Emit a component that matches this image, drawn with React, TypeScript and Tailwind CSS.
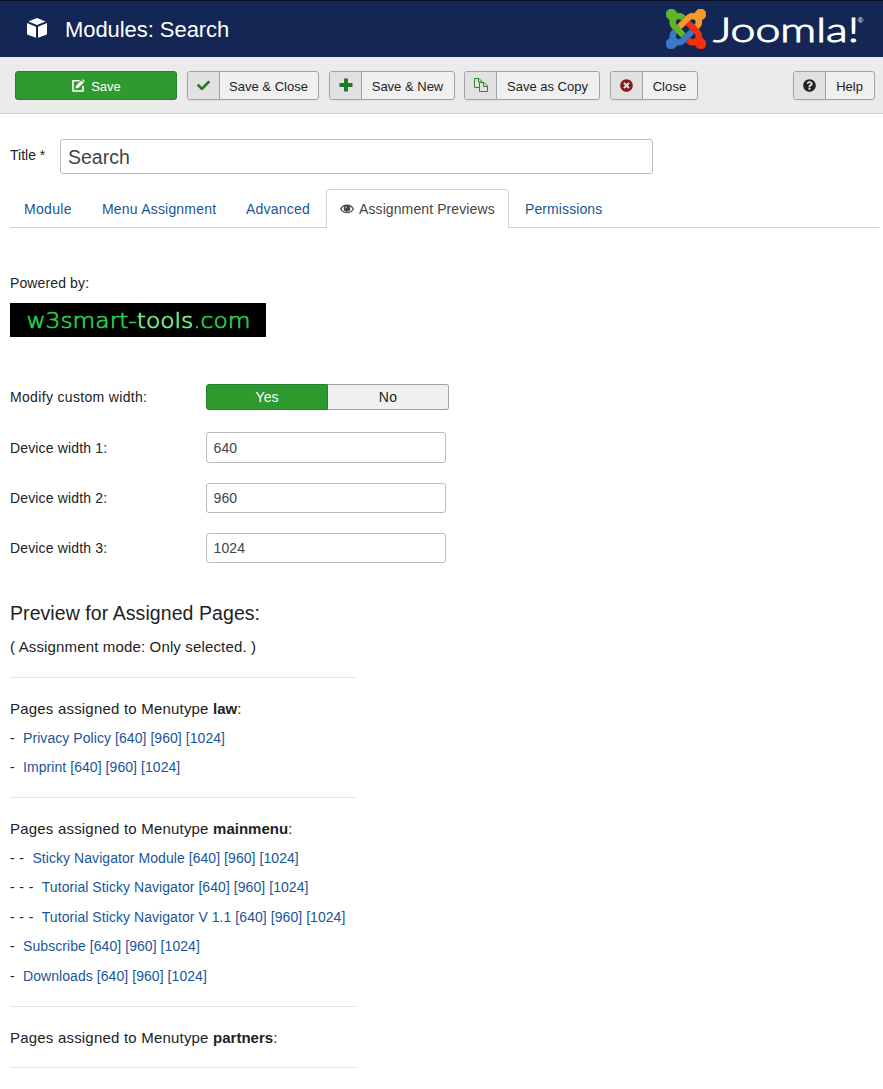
import type { ReactNode } from 'react';
import { FaCheck, FaTimesCircle, FaQuestionCircle } from 'react-icons/fa';

function CubeIcon() {
  return (
    <svg viewBox="0 0 20 20" className="mb-[2px] h-5 w-5" fill="#fff">
      <path d="M10 0 18.600 3.400 10 7 1.400 3.400z" />
      <path d="M0 5 9 8.700v11.100L.7 16.700Q0 16.400 0 15.700z" />
      <path d="M20 5 11 8.700v11.100l8.300-3.100q.7-.3.7-1z" />
    </svg>
  );
}

function EditIcon() {
  return (
    <svg viewBox="0 0 13 13" className="mb-px h-[13px] w-[13px]" fill="none">
      <path d="M7.6 1.8H1v10.200h10V7" stroke="#fff" strokeWidth="1.6" />
      <path d="m4 6.800 5.400-5.200 2.300 2.200L6.300 9.100l-2.800.5z" fill="#fff" />
      <path d="m10.100 1 .8-.8L13 2.300l-.8.8z" fill="#fff" />
    </svg>
  );
}

function PlusIcon() {
  return (
    <svg viewBox="0 0 14 14" className="mb-px h-3.5 w-3.5" fill="#217a25">
      <path d="M5 .5h4v4.500h4.500v4H9v4.500H5V9H.5V5H5z" />
    </svg>
  );
}

function EyeIcon() {
  return (
    <svg viewBox="0 0 14 10" className="mt-[5px] mr-[5px] h-[10px] w-[14px]" fill="none">
      <path d="M.7 5C3.500-.1 10.500-.1 13.300 5 10.500 10 3.500 10 .7 5z" stroke="#444" strokeWidth="1.200" />
      <circle cx="7" cy="4.500" r="3.200" fill="#444" />
      <path d="M5.500 4.300Q5.600 3 7 2.800" stroke="#fff" strokeWidth=".8" />
    </svg>
  );
}

function CopyIcon() {
  return (
    <svg viewBox="0 0 14 14" className="mb-px h-3.5 w-3.5" fill="none" stroke="#2f8733" strokeWidth="1">
      <path d="M5.500 9.500h-5v-9h4.500l3 3v1.500" />
      <path d="M4.500.5v3.500h3.500" />
      <path d="M5.500 4.500h4.500l3.500 3.500v5.500h-8z" fill="#e1e1e1" />
      <path d="M9.500 4.500v4h4" />
    </svg>
  );
}

function JoomlaMark() {
  return (
    <svg viewBox="0 32 448 448" className="mb-px h-10 w-10 shrink-0">
      <path fill="#5eb527" stroke="#5eb527" strokeWidth="10" d="M.6 92.1C.6 58.8 27.4 32 60.4 32c30 0 54.5 21.9 59.2 50.2 32.6-7.6 67.1.6 96.5 30l-44.3 44.3c-20.5-20.5-42.6-16.3-55.4-3.5-14.3 14.3-14.3 37.9 0 52.2l99.5 99.5-44 44.3c-87.7-87.2-49.7-49.7-99.8-99.7-26.8-26.5-35-64.8-24.8-98.9C20.4 144.6.6 120.7.6 92.1z" />
      <path fill="#f99a27" stroke="#f99a27" strokeWidth="10" d="M130.1 208.5l44.3 44.3c10-10 89.7-89.7 99.7-99.8 14.3-14.3 37.6-14.3 51.9 0 12.8 12.8 17 35-3.5 55.4l44 44.3c31.2-31.2 38.5-67.6 28.9-101.2 29.2-4.1 51.9-29.2 51.9-59.5 0-33.2-26.8-60.1-59.8-60.1-30.3 0-55.4 22.5-59.5 51.6-33.8-9.9-71.7-1.5-98.3 25.1-18.3 19.1-71.1 71.5-99.6 99.9z" />
      <path fill="#f52e0d" stroke="#f52e0d" strokeWidth="10" d="M396.4 360.7c8.2-32.7-.9-68.5-26.3-93.9-11.8-12.2 5 4.700-99.5-99.7l-44.3 44.3 99.7 99.7c14.3 14.3 14.3 37.6 0 51.9-12.8 12.8-35 17-55.4-3.500l-44 44.3c27.6 30.2 68 38.8 102.7 28 5.500 27.4 29.7 48.1 58.9 48.1 33 0 59.8-26.8 59.8-60.1 0-30.2-22.500-55-51.6-59.1z" />
      <path fill="#3c78c8" stroke="#3c78c8" strokeWidth="10" d="M312.1 307.6l-44-44.3c-87 86.4-50.4 50.4-99.7 99.8-14.3 14.3-37.6 14.3-51.9 0-13.1-13.4-16.9-35.3 3.200-55.4l-44-44.3c-30.2 30.2-38 65.2-29.500 98.3-26.7 6-46.2 29.9-46.2 58.2C0 453.2 26.8 480 59.8 480c28.6 0 52.500-19.8 58.6-46.7 32.7 8.2 68.500-.6 94.2-26 32.1-32 12.2-12.4 99.500-99.7z" />
    </svg>
  );
}

function ToolButton({ icon, label, className, text }: { icon: ReactNode; label: string; className: string; text?: string }) {
  return (
    <button className={`flex h-[29px] overflow-hidden rounded-[3px] border border-[#a3a3a3] bg-[#f0f0f0] text-[13px] text-[#222] shadow-[0_1px_2px_rgba(0,0,0,0.05)] ${className}`}>
      <span className="flex h-full w-8 shrink-0 items-center justify-center border-r border-[#a3a3a3] bg-[#e1e1e1]">{icon}</span>
      <span className={`flex h-full flex-1 items-center justify-center whitespace-nowrap pt-[2px] pr-px ${text ?? ''}`}>{label}</span>
    </button>
  );
}

function DeviceRow({ n, value, className, labelPad, inputPad }: { n: number; value: string; className: string; labelPad: string; inputPad: string }) {
  return (
    <div className={`flex ${className}`}>
      <label className={`w-[196px] leading-5 tracking-[0.15px] ${labelPad}`}>Device width {n}:</label>
      <input defaultValue={value} className={`h-full w-[240px] rounded-[3px] border border-[#bbb] px-[6.5px] text-[14px] tracking-[0.1px] text-[#444] ${inputPad}`} />
    </div>
  );
}

type Item = [string, string];

function Group({ name, items }: { name: string; items: Item[] }) {
  return (
    <section className="w-[346px] border-t border-[#e5e5e5] pb-[15px]">
      <h4 className="mt-[21px] mb-1 h-5 whitespace-nowrap text-[15px] leading-5 tracking-[0.2px]">
        Pages assigned to Menutype <b className="tracking-[0.01px]">{name}</b>:
      </h4>
      {items.map(([dashes, label]) => (
        <div key={label} className="flex h-[29.500px] items-center whitespace-nowrap pt-[0.3px] tracking-[0.06px]">
          <span className="mr-[8px] tracking-[0.4px]">{dashes}</span>
          <a className="text-[#1a5599]">{label} [640] [960] [1024]</a>
        </div>
      ))}
    </section>
  );
}

export default function App() {
  return (
    <div className="h-[1089px] w-[883px] overflow-hidden bg-white font-['Liberation_Sans',Arial,sans-serif] text-[14px] leading-5 text-[#222]">
      <header className="flex h-[57px] items-center border-t border-[#0c1222] bg-[#132654] pr-[19px] pl-[27px] text-white">
        <CubeIcon />
        <h1 className="ml-[18px] pt-[2px] text-[22px] leading-7 tracking-[-0.06px]">Modules: Search</h1>
        <div className="ml-auto flex items-center gap-[6px]">
          <JoomlaMark />
          <svg viewBox="0 0 152 40" className="h-10 w-[152px]" fill="#fff">
            <text x="1" y="32.500" fontSize="33" fontWeight="300" textLength="146" lengthAdjust="spacingAndGlyphs" className="font-['Lato',sans-serif]" stroke="#fff" strokeWidth="1">Joomla!</text>
            <text x="145.500" y="14" fontSize="8" className="font-['Liberation_Sans',sans-serif]">®</text>
          </svg>
        </div>
      </header>

      <div className="flex h-[57px] border-b border-[#d3d3d3] bg-[#ebebeb] pt-[14px] pr-2 pl-[15px]">
        <button className="flex h-[29px] w-[162px] items-center justify-center gap-[6px] rounded-[3px] border border-[#24802a] bg-[#2f9a2f] pt-px pl-px text-[13px] text-white">
          <EditIcon />
          <span className="pt-px">Save</span>
        </button>
        <ToolButton className="ml-[10px] w-[132px]" icon={<FaCheck size={13} color="#217a25" />} label="Save & Close" />
        <ToolButton className="ml-[10px] w-[126px]" icon={<PlusIcon />} label="Save & New" />
        <ToolButton className="ml-[9px] w-[136px]" icon={<CopyIcon />} label="Save as Copy" />
        <ToolButton className="ml-[10px] w-[88px]" text="tracking-[0.1px]" icon={<FaTimesCircle size={13} color="#8a1a1c" />} label="Close" />
        <ToolButton className="ml-auto w-[82px]" icon={<FaQuestionCircle size={13} color="#222" />} label="Help" />
      </div>

      <main className="pr-1 pl-[10px]">
        <div className="flex pt-[25px]">
          <label className="w-[50px] pt-[6px]">Title *</label>
          <input defaultValue="Search" className="h-[35px] w-[593px] rounded-[3px] border border-[#bbb] px-[7px] pt-[2px] text-[19.500px] text-[#444]" />
        </div>

        <nav className="mt-[15px] flex h-[39px] border-b border-[#d3d3d3] whitespace-nowrap text-[#1a5599]">
          <a className="ml-[14px] w-[78px] pt-[10px] tracking-[0.3px]">Module</a>
          <a className="w-[144px] pt-[10px] tracking-[0.2px]">Menu Assignment</a>
          <a className="w-[80px] pt-[10px] tracking-[0.2px]">Advanced</a>
          <a className="flex h-[39px] w-[183px] items-start rounded-t border border-b-0 border-[#d3d3d3] bg-white pt-[9px] pl-[13px] tracking-[0.1px] text-[#444]">
            <EyeIcon />
            Assignment Previews
          </a>
          <a className="ml-4 pt-[10px] tracking-[0.1px]">Permissions</a>
        </nav>

        <p className="mt-[45px] tracking-[0.12px]">Powered by:</p>
        <div className="mt-[10px] h-[34px] w-[256px] bg-black">
          <svg viewBox="0 0 256 34" className="h-[34px] w-[256px]">
            <text x="16.500" y="25" fontSize="21" fontWeight="200" textLength="224" lengthAdjust="spacingAndGlyphs" className="font-['DejaVu_Sans',sans-serif]" fill="#2bcb51" stroke="#2bcb51" strokeWidth=".7">
              w3smart-<tspan fill="#7df08f" stroke="#7df08f">tools</tspan>.com
            </text>
          </svg>
        </div>

        <div className="mt-[47px] flex h-[26px]">
          <span className="w-[196px] pt-[3px] tracking-[0.33px]">Modify custom width:</span>
          <div className="flex w-[243px]">
            <button className="w-[122px] rounded-l-[3px] border border-[#24802a] bg-[#2f9a2f] text-white">Yes</button>
            <button className="w-[121px] rounded-r-[3px] border border-l-0 border-[#a3a3a3] bg-[#f0f0f0] tracking-[0.2px]">No</button>
          </div>
        </div>
        <DeviceRow n={1} value="640" className="mt-[22px] h-[31px]" labelPad="pt-[6px]" inputPad="pt-px" />
        <DeviceRow n={2} value="960" className="mt-5 h-[30px]" labelPad="pt-[5px]" inputPad="pb-px" />
        <DeviceRow n={3} value="1024" className="mt-5 h-[30px]" labelPad="pt-[5px]" inputPad="pb-px" />

        <h2 className="mt-[40px] text-[19.500px] leading-5 tracking-[0.07px]">Preview for Assigned Pages:</h2>
        <p className="mt-[14px] mb-5 text-[15px] leading-5 tracking-[0.15px]">( Assignment mode: Only selected. )</p>

        <Group name="law" items={[['-', 'Privacy Policy'], ['-', 'Imprint']]} />
        <Group
          name="mainmenu"
          items={[
            ['- -', 'Sticky Navigator Module'],
            ['- - -', 'Tutorial Sticky Navigator'],
            ['- - -', 'Tutorial Sticky Navigator V 1.1'],
            ['-', 'Subscribe'],
            ['-', 'Downloads'],
          ]}
        />
        <Group name="partners" items={[]} />
        <hr className="w-[346px] border-t border-[#e5e5e5]" />
      </main>
    </div>
  );
}
